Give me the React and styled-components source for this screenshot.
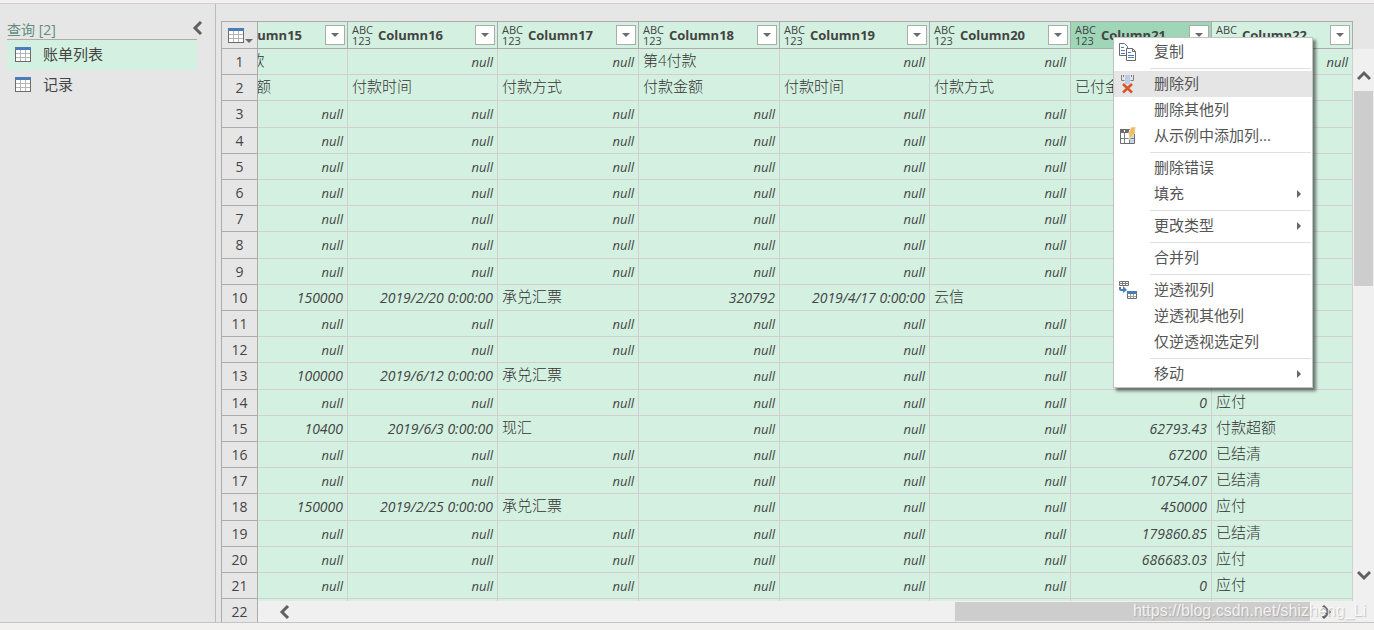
import React from 'react';
import styled, { createGlobalStyle, css } from 'styled-components';

const NULL = null;

const COLUMNS = [
    { name: 'Column15', width: 141 },
    { name: 'Column16', width: 150 },
    { name: 'Column17', width: 141 },
    { name: 'Column18', width: 141 },
    { name: 'Column19', width: 150 },
    { name: 'Column20', width: 141 },
    { name: 'Column21', width: 141, selected: true },
    { name: 'Column22', width: 141 },
];

const ROWS = [
    ['第3付款', NULL, NULL, '第4付款', NULL, NULL, '', NULL],
    ['付款金额', '付款时间', '付款方式', '付款金额', '付款时间', '付款方式', '已付金额', ''],
    [NULL, NULL, NULL, NULL, NULL, NULL, '', ''],
    [NULL, NULL, NULL, NULL, NULL, NULL, '', ''],
    [NULL, NULL, NULL, NULL, NULL, NULL, '', ''],
    [NULL, NULL, NULL, NULL, NULL, NULL, '', ''],
    [NULL, NULL, NULL, NULL, NULL, NULL, '', ''],
    [NULL, NULL, NULL, NULL, NULL, NULL, '', ''],
    [NULL, NULL, NULL, NULL, NULL, NULL, '', ''],
    [150000, { date: '2019/2/20 0:00:00' }, '承兑汇票', 320792, { date: '2019/4/17 0:00:00' }, '云信', '', ''],
    [NULL, NULL, NULL, NULL, NULL, NULL, '', ''],
    [NULL, NULL, NULL, NULL, NULL, NULL, '', ''],
    [100000, { date: '2019/6/12 0:00:00' }, '承兑汇票', NULL, NULL, NULL, '', ''],
    [NULL, NULL, NULL, NULL, NULL, NULL, 0, '应付'],
    [10400, { date: '2019/6/3 0:00:00' }, '现汇', NULL, NULL, NULL, 62793.43, '付款超额'],
    [NULL, NULL, NULL, NULL, NULL, NULL, 67200, '已结清'],
    [NULL, NULL, NULL, NULL, NULL, NULL, 10754.07, '已结清'],
    [150000, { date: '2019/2/25 0:00:00' }, '承兑汇票', NULL, NULL, NULL, 450000, '应付'],
    [NULL, NULL, NULL, NULL, NULL, NULL, 179860.85, '已结清'],
    [NULL, NULL, NULL, NULL, NULL, NULL, 686683.03, '应付'],
    [NULL, NULL, NULL, NULL, NULL, NULL, 0, '应付'],
    ['', '', '', '', '', '', '', ''],
];

const GlobalStyle = createGlobalStyle`
    * {
        box-sizing: border-box;
    }
    body {
        margin: 0;
        background: #f2f1f0;
        color: #444;
        font-family: "Open Sans", "Noto Sans CJK SC", sans-serif;
        font-size: 15px;
    }
    button {
        border: 0;
        padding: 0;
        background: none;
        color: inherit;
        font: inherit;
    }
    svg {
        display: block;
    }
`

const Page = styled.div`
    height: 100vh;
    padding: 3px 0 7px;
    overflow: hidden;
`

const Editor = styled.div`
    position: relative;
    display: flex;
    height: 100%;
    border-top: 1px solid #cfcfcf;
    border-bottom: 1px solid #c4c4c4;
    background: #e6e6e6;
`

const Sidebar = styled.nav`
    flex: 0 0 216px;
    min-width: 0;
    padding: 14px 10px 0 7px;
    border-right: 1px solid #bcbcbc;
`

const SidebarHeader = styled.header`
    display: flex;
    justify-content: space-between;
    height: 21px;
`

const SidebarTitle = styled.h2`
    margin: 0;
    padding-top: 3px;
    color: #5f8f7d;
    font-size: 14px;
    font-weight: 400;
    line-height: 18px;
`

const CollapseButton = styled.button`
    height: 20px;
    flex: 0 0 auto;
`

const QueryList = styled.ul`
    width: 190px;
    margin: 0;
    padding: 0;
    border-top: 1px solid #acacac;
    list-style: none;
`

const QueryButton = styled.button`
    display: flex;
    align-items: center;
    gap: 12px;
    width: 100%;
    height: 30px;
    padding: 0 0 2px 8px;
    background: ${({ $active }) => ($active ? '#d3f0e0' : 'transparent')};
    line-height: 20px;
`

const Workspace = styled.main`
    flex: 1;
    display: flex;
    min-width: 0;
    padding: 17px 0 0 5px;
    overflow: hidden;
`

const headCell = css`
    height: 27px;
    padding: 0;
    border-bottom: 1px solid #ababab;
`

const rowHeight = css`
    tbody tr {
        height: 26px;
    }
    tbody tr:nth-child(5n + 3) {
        height: 27px;
    }
`

const Gutter = styled.table`
    flex: 0 0 37px;
    width: 37px;
    align-self: flex-start;
    border-collapse: separate;
    border-spacing: 0;
    border-left: 1px solid #ababab;
    border-right: 1px solid #ababab;
    border-top: 1px solid #ababab;
    ${rowHeight}
    thead th {
        ${headCell}
    }
    tbody th {
        padding: 0;
        border-bottom: 1px solid #ababab;
        font-size: 14px;
        font-weight: 400;
        line-height: 20px;
    }
`

const TableMenuButton = styled.button`
    display: flex;
    align-items: flex-end;
    gap: 1px;
    padding-left: 6px;
`

const GridPane = styled.div`
    flex: 1;
    display: flex;
    flex-direction: column;
    min-width: 0;
`

const GridBody = styled.div`
    flex: 1;
    display: flex;
    min-height: 0;
`

const Viewport = styled.div`
    flex: 1;
    min-width: 0;
    overflow: hidden;
    border-top: 1px solid #ababab;
`

const Grid = styled.table`
    width: 1146px;
    margin-left: -51px;
    table-layout: fixed;
    border-collapse: separate;
    border-spacing: 0;
    background: #d3f0e0;
    ${rowHeight}
`

const HeadCell = styled.th`
    ${headCell}
    border-right: 1px solid #ababab;
    background: ${({ $selected }) => ($selected ? '#9fd6b8' : '#d3f0e0')};
`

const HeadContent = styled.div`
    display: flex;
    align-items: center;
    height: 26px;
    padding: 0 2px 0 4px;
`

const TypeButton = styled.button`
    width: 26px;
    font-size: 11px;
    font-weight: 400;
    line-height: 11px;
    text-align: left;
`

const ColumnName = styled.span`
    flex: 1;
    font-size: 13px;
    font-weight: 700;
    line-height: 20px;
    text-align: left;
`

const FilterButton = styled.button`
    display: flex;
    align-items: center;
    justify-content: center;
    width: 20px;
    height: 20px;
    border: 1px solid #ababab;
    background: #fff;
`

const Cell = styled.td`
    padding: 0 4px;
    border-right: 1px solid #d0d0d0;
    border-bottom: 1px solid #d0d0d0;
    font-size: ${({ $empty }) => ($empty ? '13px' : '14px')};
    font-style: italic;
    line-height: 20px;
    text-align: right;
    white-space: nowrap;
`

const TextCell = styled(Cell)`
    padding-bottom: 4px;
    color: #333;
    font-size: 15px;
    font-style: normal;
    font-weight: 300;
    text-align: left;
`

const VerticalBar = styled.div`
    flex: 0 0 21px;
    display: flex;
    flex-direction: column;
    align-items: center;
    margin-top: 28px;
    padding-bottom: 16px;
    background: #f0f0f0;
`

const VerticalTrack = styled.div`
    flex: 1;
    width: 19px;
`

const VerticalThumb = styled.div`
    height: 195px;
    background: #cdcdcd;
`

const ScrollButton = styled.button`
    display: flex;
    align-items: center;
    justify-content: center;
    width: 21px;
    height: ${({ $tall }) => ($tall ? '42px' : '21px')};
    padding-top: ${({ $tall }) => ($tall ? '12px' : 0)};
`

const HorizontalBar = styled.div`
    position: relative;
    flex: 0 0 21px;
    display: flex;
    align-items: center;
    padding: 0 38px 0 16px;
    background: #f0f0f0;
`

const HorizontalTrack = styled.div`
    flex: 1;
    display: flex;
    justify-content: flex-end;
    padding-right: 5px;
`

const HorizontalThumb = styled.div`
    width: 35%;
    height: 19px;
    background: #cdcdcd;
`

const Watermark = styled.span`
    position: absolute;
    right: 8px;
    bottom: 0;
    color: rgba(255, 255, 255, 0.8);
    font-family: "Liberation Sans", sans-serif;
    font-size: 16px;
    line-height: 22px;
    text-shadow: 1px 1px 1px rgba(120, 120, 120, 0.4);
    pointer-events: none;
`

const ContextMenu = styled.div`
    position: absolute;
    top: 33px;
    right: 61px;
    width: 200px;
    padding: 1px 0 0;
    border: 1px solid #c3c3c3;
    background: #fff;
    box-shadow: 3px 3px 3px rgba(0, 0, 0, 0.5);
`

const MenuItem = styled.button`
    display: flex;
    align-items: center;
    width: 100%;
    height: 26px;
    padding: 0 11px 0 4px;
    background: ${({ $active }) => ($active ? '#e5e5e5' : 'transparent')};
    color: #555;
    line-height: 20px;
`

const MenuIcon = styled.span`
    flex: 0 0 36px;
`

const MenuLabel = styled.span`
    flex: 1;
    padding-bottom: 2px;
    text-align: left;
`

const MenuSeparator = styled.hr`
    height: 1px;
    margin: 3px 1px 2px 36px;
    border: 0;
    background: #e0e0e0;
`

const TableIcon = () => (
    <svg width="16" height="15" viewBox="0 0 16 15" shapeRendering="crispEdges">
        <path fill="#fff" d="M0 0h16v15H0z" />
        <path fill="#b5b5b5" d="M5 3h1v11H5zM10 3h1v11h-1zM1 6h14v1H1zM1 10h14v1H1z" />
        <path fill="#6b6b6b" d="M0 3h1v12H0zM15 3h1v12h-1zM0 14h16v1H0z" />
        <path fill="#4a7ebb" d="M0 0h16v3H0z" />
    </svg>
)

const Triangle = () => (
    <svg width="8" height="4" viewBox="0 0 8 4"><path fill="#6b6b6b" d="M0 0h8L4 4z" /></svg>
)

const SubmenuArrow = () => (
    <svg width="4" height="8" viewBox="0 0 4 8"><path fill="#666" d="M0 0l4 4-4 4z" /></svg>
)

const CHEVRONS = {
    left: 'M10 1L4 7l6 6',
    right: 'M4 1l6 6-6 6',
    up: 'M1 10l6-6 6 6',
    down: 'M1 4l6 6 6-6',
}

const Chevron = ({ to }) => (
    <svg width="14" height="14" viewBox="0 0 14 14">
        <path fill="none" stroke="#606060" strokeWidth="3" d={CHEVRONS[to]} />
    </svg>
)

const CopyIcon = () => (
    <svg width="20" height="20" viewBox="0 0 20 20">
        <path fill="#fff" stroke="#6b6b6b" d="M1.500 1.500h5l3 3v9h-8z" />
        <path stroke="#4a7ebb" d="M3 5.500h3M3 8.500h4M3 11.500h4" />
        <path fill="#fff" stroke="#6b6b6b" d="M8.500 6.500h6l3 3v9h-9z" />
        <path fill="none" stroke="#6b6b6b" d="M14.500 6.500v3h3" />
        <path stroke="#4a7ebb" d="M10 10.500h3M10 13.500h6M10 15.500h6" />
    </svg>
)

const RemoveIcon = () => (
    <svg width="20" height="20" viewBox="0 0 20 20">
        <path fill="#b8cde6" d="M7 1h5v9H7z" />
        <path fill="none" stroke="#808080" d="M3.500 1v5.500h3M15.500 1v5.500h-3M5.500 1v2M13.500 1v2" />
        <path stroke="#d9532c" strokeWidth="2.500" d="M5 10l9 8.500M14 10l-9 8.500" />
    </svg>
)

const ExampleIcon = () => (
    <svg width="20" height="20" viewBox="0 0 20 20">
        <path fill="#fff" stroke="#6b6b6b" d="M2.500 3.500h14v14h-14z" />
        <path fill="#6b6b6b" d="M2 3h9v4H2z" />
        <path fill="#c5d5ec" d="M12 9h4v8h-4z" />
        <path stroke="#808080" d="M6.500 7v10M11.500 7v10M3 12.500h13" />
        <path stroke="#fff" d="M6.500 4v2" />
        <path fill="#f2bd62" stroke="#fff" strokeWidth=".5" d="M13 1h5l-2 5h2l-8 9 2-6h-2z" />
    </svg>
)

const UnpivotIcon = () => (
    <svg width="20" height="20" viewBox="0 0 20 20">
        <path fill="#fff" stroke="#6b6b6b" d="M1.500 1.500h9v4h-9z" />
        <path stroke="#808080" d="M1 3.500h10M4.500 1v5M7.500 1v5" />
        <path fill="none" stroke="#4a7ebb" strokeWidth="2" d="M2 7v2q0 1 2 1h3" />
        <path fill="#4a7ebb" d="M5 6l4 4-4 3z" />
        <path fill="#fff" stroke="#6b6b6b" d="M9.500 11.500h9v7h-9z" />
        <path stroke="#a0a0a0" d="M10 16.500h8M12.500 13v5M15.500 13v5" />
        <path fill="#4a7ebb" d="M9 11h10v3H9z" />
    </svg>
)

const MENU = [
    [{ label: '复制', icon: <CopyIcon /> }],
    [
        { label: '删除列', icon: <RemoveIcon />, active: true },
        { label: '删除其他列' },
        { label: '从示例中添加列...', icon: <ExampleIcon /> },
    ],
    [{ label: '删除错误' }, { label: '填充', submenu: true }],
    [{ label: '更改类型', submenu: true }],
    [{ label: '合并列' }],
    [{ label: '逆透视列', icon: <UnpivotIcon /> }, { label: '逆透视其他列' }, { label: '仅逆透视选定列' }],
    [{ label: '移动', submenu: true }],
]

const DataCell = ({ value }) => {
    if (value === null) {
        return <Cell $empty>null</Cell>
    }
    if (typeof value === 'string') {
        return <TextCell>{value}</TextCell>
    }
    return <Cell>{value.date || value}</Cell>
}

const Queries = () => (
    <Sidebar>
        <SidebarHeader>
            <SidebarTitle>查询 [2]</SidebarTitle>
            <CollapseButton aria-label="折叠"><Chevron to="left" /></CollapseButton>
        </SidebarHeader>
        <QueryList>
            <li><QueryButton $active><TableIcon />账单列表</QueryButton></li>
            <li><QueryButton><TableIcon />记录</QueryButton></li>
        </QueryList>
    </Sidebar>
)

const RowNumbers = () => (
    <Gutter>
        <thead>
            <tr>
                <th><TableMenuButton aria-label="表"><TableIcon /><Triangle /></TableMenuButton></th>
            </tr>
        </thead>
        <tbody>
            {ROWS.map((row, index) => <tr key={index}><th scope="row">{index + 1}</th></tr>)}
        </tbody>
    </Gutter>
)

const DataGrid = () => (
    <Grid>
        <colgroup>
            {COLUMNS.map(({ name, width }) => <col key={name} width={width} />)}
        </colgroup>
        <thead>
            <tr>
                {COLUMNS.map(({ name, selected }) => (
                    <HeadCell key={name} $selected={selected}>
                        <HeadContent>
                            <TypeButton>ABC<br />123</TypeButton>
                            <ColumnName>{name}</ColumnName>
                            <FilterButton aria-label={name}><Triangle /></FilterButton>
                        </HeadContent>
                    </HeadCell>
                ))}
            </tr>
        </thead>
        <tbody>
            {ROWS.map((row, index) => (
                <tr key={index}>
                    {row.map((value, column) => <DataCell key={column} value={value} />)}
                </tr>
            ))}
        </tbody>
    </Grid>
)

const ColumnMenu = () => (
    <ContextMenu role="menu">
        {MENU.map((group, index) => (
            <React.Fragment key={index}>
                {index > 0 && <MenuSeparator />}
                {group.map(({ label, icon, active, submenu }) => (
                    <MenuItem key={label} role="menuitem" $active={active}>
                        <MenuIcon>{icon}</MenuIcon>
                        <MenuLabel>{label}</MenuLabel>
                        {submenu && <SubmenuArrow />}
                    </MenuItem>
                ))}
            </React.Fragment>
        ))}
    </ContextMenu>
)

const App = () => (
    <Page>
        <GlobalStyle />
        <Editor>
            <Queries />
            <Workspace>
                <RowNumbers />
                <GridPane>
                    <GridBody>
                        <Viewport><DataGrid /></Viewport>
                        <VerticalBar>
                            <ScrollButton $tall aria-label="向上"><Chevron to="up" /></ScrollButton>
                            <VerticalTrack><VerticalThumb /></VerticalTrack>
                            <ScrollButton aria-label="向下"><Chevron to="down" /></ScrollButton>
                        </VerticalBar>
                    </GridBody>
                    <HorizontalBar>
                        <ScrollButton aria-label="向左"><Chevron to="left" /></ScrollButton>
                        <HorizontalTrack><HorizontalThumb /></HorizontalTrack>
                        <ScrollButton aria-label="向右"><Chevron to="right" /></ScrollButton>
                        <Watermark>https://blog.csdn.net/shizheng_Li</Watermark>
                    </HorizontalBar>
                </GridPane>
            </Workspace>
            <ColumnMenu />
        </Editor>
    </Page>
)

export default App
